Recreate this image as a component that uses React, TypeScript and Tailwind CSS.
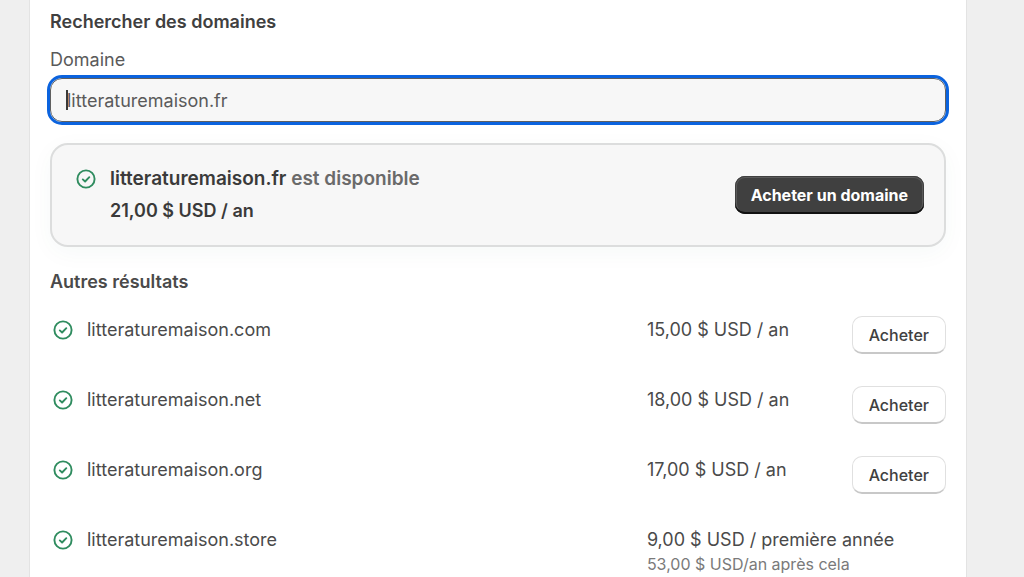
import { useState } from "react";

type Result = { name: string; price: string; note?: string };

const results: Result[] = [
  { name: "litteraturemaison.com", price: "15,00 $ USD / an" },
  { name: "litteraturemaison.net", price: "18,00 $ USD / an" },
  { name: "litteraturemaison.org", price: "17,00 $ USD / an" },
  {
    name: "litteraturemaison.store",
    price: "9,00 $ USD / première année",
    note: "53,00 $ USD/an après cela",
  },
];

function CheckCircle() {
  return (
    <svg
      viewBox="0 0 20 20"
      className="size-5 shrink-0 text-[#2f8c5f]"
      fill="none"
      stroke="currentColor"
      strokeWidth="1.9"
      strokeLinecap="round"
      strokeLinejoin="round"
      aria-hidden="true"
    >
      <circle cx="10" cy="10" r="8.6" />
      <path d="M6.8 10.4 L9.1 12.5 L13.3 8.2" />
    </svg>
  );
}

export default function App() {
  const [domain, setDomain] = useState("litteraturemaison.fr");

  return (
    <div className="min-h-screen bg-[#efefef] pr-[57px] pl-[29px] font-['Inter',sans-serif] text-lg text-[#4a4a4a]">
      <main className="min-h-screen border-x border-[#e3e3e3] bg-white px-5 pt-2">
        <h2 className="leading-7 font-semibold text-[#404040]">Rechercher des domaines</h2>
        <label htmlFor="domain" className="mt-3 block leading-6 text-[#5a5a5a]">
          Domaine
        </label>
        <div className="relative mt-[6px]">
          <input
            id="domain"
            type="text"
            value={domain}
            onChange={(e) => setDomain(e.target.value)}
            className="block h-11 w-full rounded-xl border border-[#606060] bg-[#f7f7f7] px-4 text-[#5a5a5a] caret-transparent outline-3 outline-[#0b63de]"
          />
          <span className="pointer-events-none absolute top-3 left-4 h-5 w-[2px] bg-[#3a3a3a]" />
        </div>

        <section className="mt-[21px] flex items-center justify-between rounded-[18px] border-2 border-[#dcdddd] bg-[#f7f7f7] py-[18px] pr-5 pl-6 shadow-[0_6px_24px_rgba(30,100,80,0.04)]">
          <div className="flex gap-[14px]">
            <div className="pt-[6px]">
              <CheckCircle />
            </div>
            <div className="leading-8 font-semibold text-[#3a3a3a]">
              <p className="text-[19px]">
                litteraturemaison.fr <span className="text-[#6a6a6a]">est disponible</span>
              </p>
              <p>21,00 $ USD / an</p>
            </div>
          </div>
          <button
            type="button"
            className="h-[38px] rounded-[10px] bg-[#404040] px-4 text-base font-bold text-white shadow-[inset_0_-2px_0_0_#111111,inset_0_0_0_1px_#404040,inset_0_0_0_2px_#5a5a5a]"
          >
            Acheter un domaine
          </button>
        </section>

        <h3 className="mt-[21px] leading-7 font-semibold text-[#4a4a4a]">Autres résultats</h3>
        <table className="mt-5 w-full table-fixed">
          <colgroup>
            <col />
            <col className="w-[22%]" />
            <col className="w-[102px]" />
          </colgroup>
          <tbody>
            {results.map((r) => (
              <tr key={r.name} className="h-[70px] align-top">
                <td>
                  <div className="flex items-center gap-[14px] pl-[3px] leading-7">
                    <CheckCircle />
                    {r.name}
                  </div>
                </td>
                <td colSpan={r.note ? 2 : 1} className="leading-7">
                  {r.price}
                  {r.note && <p className="text-base leading-5 text-[#7a7a7a]">{r.note}</p>}
                </td>
                {!r.note && (
                  <td className="text-right">
                    <button
                      type="button"
                      className="h-[38px] rounded-[10px] border border-b-2 border-[#e0e0e0] border-b-[#c8c8c8] bg-white px-4 text-base font-medium text-[#404040]"
                    >
                      Acheter
                    </button>
                  </td>
                )}
              </tr>
            ))}
          </tbody>
        </table>
      </main>
    </div>
  );
}
